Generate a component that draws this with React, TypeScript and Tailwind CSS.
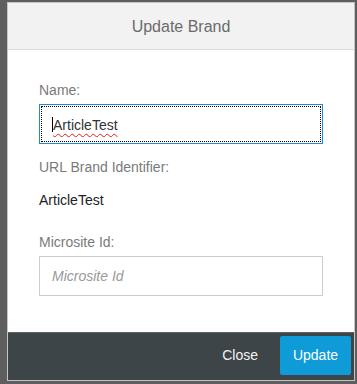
import React from "react";

export default function App() {
  return (
    <div
      className="w-[357px] h-[384px] bg-[#5e5e5e] pt-[2px] pl-[7px] overflow-hidden"
      style={{ fontFamily: '"Liberation Sans", Arial, sans-serif' }}
    >
      <div className="w-[348px] h-[379px] border border-[#c4c4c4] bg-white flex flex-col">
        <div className="h-[47px] bg-[#f2f2f2] border-b border-[#dcdcdc] flex items-center justify-center">
          <span className="text-[16px] text-[#6b6b6b] leading-5 pt-[1px]">Update Brand</span>
        </div>
        <div className="flex-1 px-[31px] pt-[30px] flex flex-col">
          <div className="text-[14px] leading-5 text-[#7a7a7a]">Name:</div>
          <div className="mt-[4px] h-[40px] border border-[#1f8ad6] outline outline-dotted outline-black outline-offset-[-3px] flex items-center pl-[12px]">
            <span className="w-px h-[15px] bg-black mt-[1px]" />
            <span className="text-[14px] leading-5 text-[#333] underline decoration-wavy decoration-[#e02020] decoration-1 underline-offset-[3px] pt-[1px]">
              ArticleTest
            </span>
          </div>
          <div className="mt-[13px] text-[14px] leading-5 text-[#7a7a7a]">URL Brand Identifier:</div>
          <div className="mt-[13px] text-[14px] leading-5 text-[#222]">ArticleTest</div>
          <div className="mt-[22px] text-[14px] leading-5 text-[#7a7a7a]">Microsite Id:</div>
          <div className="mt-[4px] h-[40px] border border-[#cccccc] flex items-center pl-[12px]">
            <span className="text-[14px] leading-5 italic text-[#999]">Microsite Id</span>
          </div>
        </div>
        <div className="h-[48px] bg-[#3e4548] border-t border-[#5a6469] flex items-start justify-end pt-[3px] pr-[3px]">
          <button className="h-[39px] mr-[22px] text-[14px] text-[#f2f2f2] flex items-center">Close</button>
          <button className="w-[71px] h-[39px] bg-[#0f9bd8] rounded-[2px] text-[14px] text-white flex items-center justify-center">
            Update
          </button>
        </div>
      </div>
    </div>
  );
}
